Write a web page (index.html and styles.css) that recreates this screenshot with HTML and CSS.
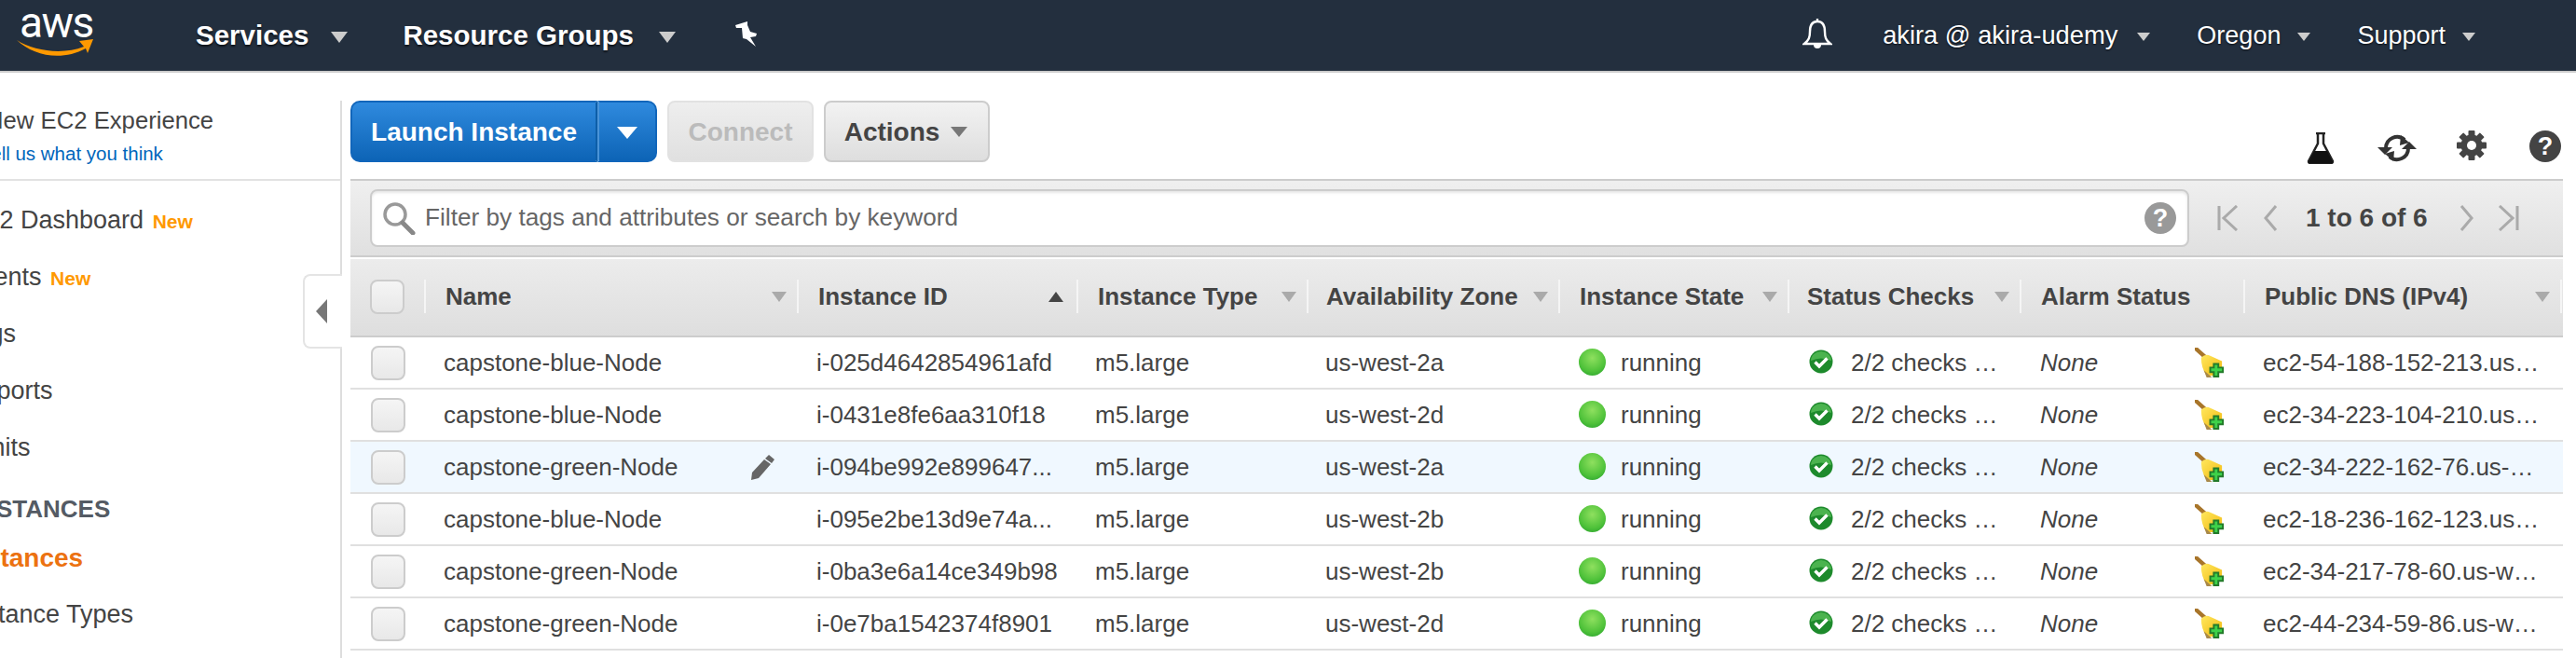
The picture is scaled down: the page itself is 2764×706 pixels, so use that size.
FILE: index.html
```html
<!DOCTYPE html>
<html lang="en">
<head>
<meta charset="utf-8">
<title>EC2 Instances</title>
<link rel="stylesheet" href="styles.css">
</head>
<body>
<svg class="defs" aria-hidden="true">
  <defs>
    <linearGradient id="broomFill" x1="0" y1="0" x2="1" y2="1"><stop offset="0" stop-color="#ffe85f"/><stop offset="1" stop-color="#f2b90f"/></linearGradient>
    <symbol id="broom" viewBox="0 0 34 34">
      <path d="M1 1 L11 10" stroke="#a8752a" stroke-width="4.5" stroke-linecap="round" fill="none"/>
      <path d="M7 11 Q12 6 17 9 L30 15 L30 24 L24 31 L13 31 Q7 22 7 11Z" fill="url(#broomFill)"/>
      <path d="M10 25 L13 33 L19 33Z" fill="#a8894a"/>
      <path d="M20 17h7v4h5v7h-5v5h-7v-5h-4v-7h4z" fill="#237a2a"/>
      <path d="M22 19h3v4h5v3h-5v5h-3v-5h-4v-3h4z" fill="#3ed24a"/>
    </symbol>
    <symbol id="check" viewBox="0 0 26 26">
      <circle cx="13" cy="13" r="12.5" fill="#1d8a2c"/>
      <path d="M2 12a11 10 0 0 1 22 0q-11-5-22 0z" fill="#5fc45e" opacity=".7"/>
      <path d="M6.5 13.5l4.5 4.5 8.5-8.5" fill="none" stroke="#fff" stroke-width="3.4"/>
    </symbol>
    <symbol id="pagerFirst" viewBox="0 0 24 28"><path d="M2 1v26M21 1L7 14l14 13" fill="none" stroke="#aaa" stroke-width="3"/></symbol>
    <symbol id="pagerPrev" viewBox="0 0 16 28"><path d="M14 1L3 14l11 13" fill="none" stroke="#aaa" stroke-width="3"/></symbol>
    <symbol id="pagerNext" viewBox="0 0 16 28"><path d="M2 1l11 13L2 27" fill="none" stroke="#aaa" stroke-width="3"/></symbol>
    <symbol id="pagerLast" viewBox="0 0 24 28"><path d="M22 1v26M3 1l14 13L3 27" fill="none" stroke="#aaa" stroke-width="3"/></symbol>
  </defs>
</svg>

<header class="topnav">
  <div class="logo">
    <span class="logo-text">aws</span>
    <svg class="logo-smile" viewBox="0 0 84 20"><path d="M0 1C18 13 50 17 72 8L67 2L82 0L76 15L74 10C48 24 18 18 0 1Z" fill="#f90"/></svg>
  </div>
  <a class="nav-main nav-services">Services<i class="caret caret-big"></i></a>
  <a class="nav-main nav-groups">Resource Groups<i class="caret caret-big caret-groups"></i></a>
  <svg class="pin" viewBox="0 0 26 28"><path d="M2 5L15 1L15 5L18 12L25 14L24 17L18 18L24 28L14 20L10 19L9 8L3 8Z" fill="#fff"/></svg>
  <span class="nav-spacer"></span>
  <svg class="bell" viewBox="0 0 32 34"><path d="M16 1v3M16 4c-6 0-8 5-8 11 0 6-1 9-6 13h28c-5-4-6-7-6-13 0-6-2-11-8-11z" fill="none" stroke="#fff" stroke-width="2.400"/><path d="M12 29a4 4 0 0 0 8 0z" fill="#fff"/></svg>
  <a class="nav-sub nav-user">akira @ akira-udemy<i class="caret caret-user"></i></a>
  <a class="nav-sub nav-region">Oregon<i class="caret"></i></a>
  <a class="nav-sub nav-support">Support<i class="caret"></i></a>
</header>

<div class="page">
  <aside class="sidebar">
    <div class="sb-inner">
      <div class="sb-promo">
        <div class="sb-promo-title">New EC2 Experience</div>
        <a class="sb-promo-link">Tell us what you think</a>
      </div>
      <nav class="sb-nav">
        <a class="sb-item">EC2 Dashboard <b class="sb-new">New</b></a>
        <a class="sb-item">Events <b class="sb-new">New</b></a>
        <a class="sb-item sb-tags">Tags</a>
        <a class="sb-item">Reports</a>
        <a class="sb-item">Limits</a>
        <div class="sb-heading">INSTANCES</div>
        <a class="sb-item sb-active">Instances</a>
        <a class="sb-item sb-types">Instance Types</a>
      </nav>
    </div>
    <div class="sb-toggle"><i class="sb-toggle-arrow"></i></div>
  </aside>

  <main class="content">
    <div class="toolbar">
      <div class="btn-split">
        <button class="btn btn-primary btn-launch">Launch Instance</button>
        <button class="btn btn-primary btn-drop"><i class="tri-white"></i></button>
      </div>
      <button class="btn btn-disabled">Connect</button>
      <button class="btn btn-default">Actions<i class="caret caret-dark"></i></button>
      <div class="tool-icons">
        <svg class="ti-flask" viewBox="0 0 30 34"><path d="M10 1h10M12 1v11L2 31q0 2 2 2h22q2 0 2-2L18 12V1" fill="none" stroke="#222" stroke-width="2.500"/><path d="M8 20h14l6 12q0 1-2 1H4q-2 0-2-1z" fill="#111"/></svg>
        <svg class="ti-refresh" viewBox="0 0 42 34"><path d="M9 17a12 12 0 0 1 20-9" fill="none" stroke="#333" stroke-width="4"/><path d="M33 17a12 12 0 0 1-20 9" fill="none" stroke="#333" stroke-width="4"/><path d="M25 3l9 8-10 3zM17 31l-9-8 10-3z" fill="#333"/><path d="M0 16h16l-8 8zM26 18h16l-8-8z" fill="#333"/></svg>
        <svg class="ti-gear" viewBox="0 0 32 32"><g fill="#444"><circle cx="16" cy="16" r="11.500"/><rect x="12.500" y="0" width="7" height="32" rx="1"/><rect x="12.500" y="0" width="7" height="32" rx="1" transform="rotate(45 16 16)"/><rect x="12.500" y="0" width="7" height="32" rx="1" transform="rotate(90 16 16)"/><rect x="12.500" y="0" width="7" height="32" rx="1" transform="rotate(135 16 16)"/></g><circle cx="16" cy="16" r="5" fill="#fff"/></svg>
        <span class="help help-dark">?</span>
      </div>
    </div>

    <div class="filterbar">
      <div class="search">
        <svg class="search-icon" viewBox="0 0 36 36"><circle cx="14" cy="14" r="11" fill="none" stroke="#999" stroke-width="3.500"/><path d="M22 23l11 11" stroke="#888" stroke-width="5" stroke-linecap="round"/></svg>
        <span class="search-ph">Filter by tags and attributes or search by keyword</span>
        <span class="help help-light">?</span>
      </div>
      <div class="pager">
        <svg class="pg pg-first"><use href="#pagerFirst"/></svg>
        <svg class="pg pg-prev"><use href="#pagerPrev"/></svg>
        <span class="pg-text">1 to 6 of 6</span>
        <svg class="pg pg-next"><use href="#pagerNext"/></svg>
        <svg class="pg pg-last"><use href="#pagerLast"/></svg>
      </div>
    </div>

    <div class="grid-row head">
      <div class="hc hc-check"><span class="cb cb-head"></span></div>
      <div class="hc"><span class="hc-label">Name</span><i class="sort"></i></div>
      <div class="hc"><span class="hc-label">Instance ID</span><i class="sort sort-up"></i></div>
      <div class="hc"><span class="hc-label">Instance Type</span><i class="sort"></i></div>
      <div class="hc hc-tight"><span class="hc-label">Availability Zone</span><i class="sort"></i></div>
      <div class="hc"><span class="hc-label">Instance State</span><i class="sort"></i></div>
      <div class="hc hc-tight"><span class="hc-label">Status Checks</span><i class="sort"></i></div>
      <div class="hc"><span class="hc-label">Alarm Status</span></div>
      <div class="hc hc-last"><span class="hc-label">Public DNS (IPv4)</span><i class="sort"></i></div>
    </div>

    <div class="grid-row row">
      <div class="c c-check"><span class="cb"></span></div><div class="c c-name">capstone-blue-Node</div><div class="c c-id">i-025d4642854961afd</div><div class="c c-type">m5.large</div><div class="c c-az">us-west-2a</div><div class="c c-state"><i class="dot"></i>running</div><div class="c c-status"><svg class="chk"><use href="#check"/></svg>2/2 checks …</div><div class="c c-alarm"><em>None</em><svg class="broom"><use href="#broom"/></svg></div><div class="c c-dns">ec2-54-188-152-213.us…</div>
    </div>
    <div class="grid-row row">
      <div class="c c-check"><span class="cb"></span></div><div class="c c-name">capstone-blue-Node</div><div class="c c-id">i-0431e8fe6aa310f18</div><div class="c c-type">m5.large</div><div class="c c-az">us-west-2d</div><div class="c c-state"><i class="dot"></i>running</div><div class="c c-status"><svg class="chk"><use href="#check"/></svg>2/2 checks …</div><div class="c c-alarm"><em>None</em><svg class="broom"><use href="#broom"/></svg></div><div class="c c-dns">ec2-34-223-104-210.us…</div>
    </div>
    <div class="grid-row row row-hover">
      <div class="c c-check"><span class="cb"></span></div><div class="c c-name">capstone-green-Node<svg class="pencil" viewBox="0 0 28 28"><path d="M21 1l6 5-3 4-7-5zM16 6l7 5L10 26l-8 2 1-8z" fill="#666"/></svg></div><div class="c c-id">i-094be992e899647...</div><div class="c c-type">m5.large</div><div class="c c-az">us-west-2a</div><div class="c c-state"><i class="dot"></i>running</div><div class="c c-status"><svg class="chk"><use href="#check"/></svg>2/2 checks …</div><div class="c c-alarm"><em>None</em><svg class="broom"><use href="#broom"/></svg></div><div class="c c-dns">ec2-34-222-162-76.us-…</div>
    </div>
    <div class="grid-row row">
      <div class="c c-check"><span class="cb"></span></div><div class="c c-name">capstone-blue-Node</div><div class="c c-id">i-095e2be13d9e74a...</div><div class="c c-type">m5.large</div><div class="c c-az">us-west-2b</div><div class="c c-state"><i class="dot"></i>running</div><div class="c c-status"><svg class="chk"><use href="#check"/></svg>2/2 checks …</div><div class="c c-alarm"><em>None</em><svg class="broom"><use href="#broom"/></svg></div><div class="c c-dns">ec2-18-236-162-123.us…</div>
    </div>
    <div class="grid-row row">
      <div class="c c-check"><span class="cb"></span></div><div class="c c-name">capstone-green-Node</div><div class="c c-id">i-0ba3e6a14ce349b98</div><div class="c c-type">m5.large</div><div class="c c-az">us-west-2b</div><div class="c c-state"><i class="dot"></i>running</div><div class="c c-status"><svg class="chk"><use href="#check"/></svg>2/2 checks …</div><div class="c c-alarm"><em>None</em><svg class="broom"><use href="#broom"/></svg></div><div class="c c-dns">ec2-34-217-78-60.us-w…</div>
    </div>
    <div class="grid-row row">
      <div class="c c-check"><span class="cb"></span></div><div class="c c-name">capstone-green-Node</div><div class="c c-id">i-0e7ba1542374f8901</div><div class="c c-type">m5.large</div><div class="c c-az">us-west-2d</div><div class="c c-state"><i class="dot"></i>running</div><div class="c c-status"><svg class="chk"><use href="#check"/></svg>2/2 checks …</div><div class="c c-alarm"><em>None</em><svg class="broom"><use href="#broom"/></svg></div><div class="c c-dns">ec2-44-234-59-86.us-w…</div>
    </div>
  </main>
</div>
</body>
</html>
```

FILE: styles.css
```css
* { box-sizing: border-box; }
html, body { margin: 0; height: 706px; overflow: hidden; background: #fff; }
body { font-family: "Liberation Sans", Arial, sans-serif; font-size: 26px; color: #444; }
.defs { position: absolute; width: 0; height: 0; }
i { display: block; font-style: normal; }

/* top navigation */
.topnav { height: 78px; background: #232f3e; border-bottom: 2px solid #ccc; display: flex; align-items: center; color: #fff; padding-left: 18px; }
.logo { width: 82px; height: 60px; flex: none; margin-top: -2px; }
.logo-text { display: block; font-family: "Roboto", sans-serif; font-size: 46px; line-height: 40px; letter-spacing: -1.5px; color: #fff; padding-left: 3px; margin-top: -3px; }
.logo-smile { display: block; width: 84px; height: 20px; margin-top: -2px; }
.nav-main { display: flex; align-items: center; font-weight: bold; font-size: 29.500px; text-shadow: 0 2px 2px rgba(0,0,0,.6); }
.nav-services { margin-left: 110px; }
.nav-groups { margin-left: 59px; }
.caret { width: 0; height: 0; border-left: 7px solid transparent; border-right: 7px solid transparent; border-top: 9px solid #ccc; margin-left: 18px; margin-top: 3px; }
.caret-big { border-left-width: 9px; border-right-width: 9px; border-top-width: 12px; margin-left: 24px; }
.caret-groups { margin-left: 27px; }
.caret-user { margin-left: 21px; }
.pin { width: 26px; height: 28px; margin-left: 62px; margin-top: -4px; }
.nav-spacer { flex: 1; }
.bell { width: 32px; height: 34px; margin-top: -4px; }
.nav-sub { display: flex; align-items: center; font-size: 27px; text-shadow: 0 1px 2px rgba(0,0,0,.7); }
.nav-user { margin-left: 54px; font-size: 27.300px; }
.nav-region { margin-left: 50px; }
.nav-support { margin-left: 50px; margin-right: 108px; }

/* page */
.page { display: flex; height: 628px; padding-top: 30px; }

/* sidebar */
.sidebar { width: 367px; flex: none; border-right: 2px solid #ddd; position: relative; }
.sb-inner { overflow: hidden; height: 100%; }
.sb-promo { border-bottom: 2px solid #e2e2e2; height: 86px; }
.sb-promo-title { height: 42px; line-height: 42px; font-size: 25.700px; color: #444; white-space: nowrap; margin-left: -15px; }
.sb-promo-link { display: block; height: 30px; line-height: 30px; font-size: 20.500px; color: #0066bb; white-space: nowrap; margin-left: -20px; }
.sb-nav { margin-left: -38px; padding-top: 12px; }
.sb-item { display: block; height: 61px; line-height: 61px; font-size: 27px; color: #444; white-space: nowrap; }
.sb-new { color: #f90; font-size: 21px; margin-left: 2px; }
.sb-tags { margin-left: -2px; }
.sb-heading { height: 58px; line-height: 58px; margin-top: 6px; margin-left: 8px; font-weight: bold; font-size: 26px; color: #545b64; white-space: nowrap; }
.sb-active { height: 48px; line-height: 48px; font-size: 28px; font-weight: bold; color: #ec7211; margin-left: -2px; }
.sb-types { margin-top: 6px; }
.sb-toggle { position: absolute; right: -2px; top: 186px; width: 42px; height: 80px; background: #fff; border: 2px solid #e4e4e4; border-right: none; border-radius: 8px 0 0 8px; display: flex; align-items: center; justify-content: center; }
.sb-toggle-arrow { width: 0; height: 0; border-top: 13px solid transparent; border-bottom: 13px solid transparent; border-right: 12px solid #777; margin-left: -4px; }

/* content */
.content { width: 2374px; margin-left: 9px; flex: none; }
.toolbar { height: 84px; display: flex; align-items: flex-start; }
.btn { height: 66px; font-family: inherit; font-size: 28px; font-weight: bold; padding: 2px 0 0; display: flex; align-items: center; justify-content: center; }
.btn-split { display: flex; width: 329px; }
.btn-primary { color: #fff; background: linear-gradient(#2f8ade, #0d64b6); border: 2px solid #1166bb; }
.btn-launch { width: 265px; border-radius: 10px 0 0 10px; border-right: 2px solid #0d5ea8; }
.btn-drop { width: 64px; border-radius: 0 10px 10px 0; border-left: 2px solid #4a94d8; }
.tri-white { width: 0; height: 0; border-left: 11px solid transparent; border-right: 11px solid transparent; border-top: 13px solid #fff; }
.btn-disabled { width: 157px; margin-left: 11px; color: #bbb; background: linear-gradient(#eee, #e0e0e0); border: 2px solid #e2e2e2; border-radius: 8px; }
.btn-default { width: 178px; margin-left: 11px; padding-right: 2px; color: #444; background: linear-gradient(#f2f2f2, #dedede); border: 2px solid #ccc; border-radius: 8px; }
.caret-dark { border-top-color: #777; border-left-width: 9px; border-right-width: 9px; border-top-width: 11px; margin-left: 12px; margin-top: -2px; }
.tool-icons { margin-left: auto; display: flex; align-items: flex-start; height: 66px; padding-top: 32px; padding-right: 2px; }
.ti-flask { width: 30px; height: 34px; margin-top: 2px; }
.ti-refresh { width: 42px; height: 34px; margin-left: 46px; margin-top: 2px; }
.ti-gear { width: 32px; height: 32px; margin-left: 43px; }
.help { display: flex; align-items: center; justify-content: center; border-radius: 50%; color: #fff; font-weight: bold; }
.help-dark { width: 34px; height: 34px; background: #444; font-size: 27px; margin-left: 46px; }
.help-light { width: 34px; height: 34px; background: #999; font-size: 27px; margin-left: auto; margin-right: 12px; }

/* filter bar */
.filterbar { height: 84px; border-top: 2px solid #ccc; border-bottom: 2px solid #ccc; background: linear-gradient(#efefef, #e0e0e0); display: flex; align-items: center; padding-left: 21px; }
.search { width: 1952px; height: 62px; background: #fff; border: 2px solid #ccc; border-radius: 8px; box-shadow: inset 0 2px 3px rgba(0,0,0,.1); display: flex; align-items: center; padding-left: 11px; }
.search-icon { width: 36px; height: 36px; flex: none; }
.search-ph { margin-left: 10px; margin-top: -2px; font-size: 26.200px; color: #666; white-space: nowrap; }
.pager { display: flex; align-items: center; margin-left: 30px; }
.pg { height: 28px; display: block; }
.pg-first, .pg-last { width: 24px; }
.pg-prev, .pg-next { width: 16px; }
.pg-prev { margin-left: 25px; }
.pg-text { margin: 0 34px 0 30px; font-size: 28px; font-weight: bold; color: #444; white-space: nowrap; }
.pg-last { margin-left: 24px; }

/* table */
.grid-row { display: grid; grid-template-columns: 79px 400px 300px 247px 270px 246px 249px 240px 343px; }
.head { height: 84px; margin-top: 2px; border-bottom: 2px solid #ccc; background: linear-gradient(#ececec, #dedede); align-items: center; padding-bottom: 2px; }
.hc { height: 36px; border-left: 2px solid #f5f5f5; display: flex; align-items: center; padding-left: 21px; padding-right: 11px; font-size: 26px; font-weight: bold; color: #444; white-space: nowrap; min-width: 0; }
.hc-tight { padding-left: 19px; }
.hc-check { border-left: none; padding-left: 21px; }
.hc-last { border-right: 2px solid #f5f5f5; margin-right: 1px; }
.sort { width: 0; height: 0; margin-left: auto; border-left: 8px solid transparent; border-right: 8px solid transparent; border-top: 11px solid #aaa; }
.sort-up { border-top: none; border-bottom: 11px solid #444; margin-right: 3px; }
.cb { display: block; width: 37px; height: 37px; flex: none; border: 2px solid #ccc; border-radius: 8px; background: linear-gradient(#f5f5f5, #e8e8e8); }
.row { height: 56px; border-bottom: 2px solid #e0e0e0; align-items: center; white-space: nowrap; }
.row-hover { background: #f0f8ff; }
.c { display: flex; align-items: center; min-width: 0; }
.c-check { padding-left: 22px; }
.c-name { padding-left: 21px; padding-right: 23px; }
.pencil { width: 28px; height: 28px; margin-left: auto; }
.c-id { padding-left: 21px; }
.c-type { padding-left: 20px; }
.c-az { padding-left: 20px; }
.c-state { padding-left: 22px; }
.dot { width: 29px; height: 29px; border-radius: 50%; margin-right: 16px; margin-top: -2px; background: radial-gradient(circle at 50% 35%, #8fe05f, #4fc23a 60%, #1f9a2a); }
.c-status { padding-left: 23px; }
.chk { width: 26px; height: 26px; margin-right: 19px; margin-top: -2px; }
.c-alarm { padding-left: 22px; padding-right: 19px; }
.c-alarm em { font-style: italic; }
.broom { width: 33px; height: 33px; margin-left: auto; }
.c-dns { padding-left: 21px; }
```
